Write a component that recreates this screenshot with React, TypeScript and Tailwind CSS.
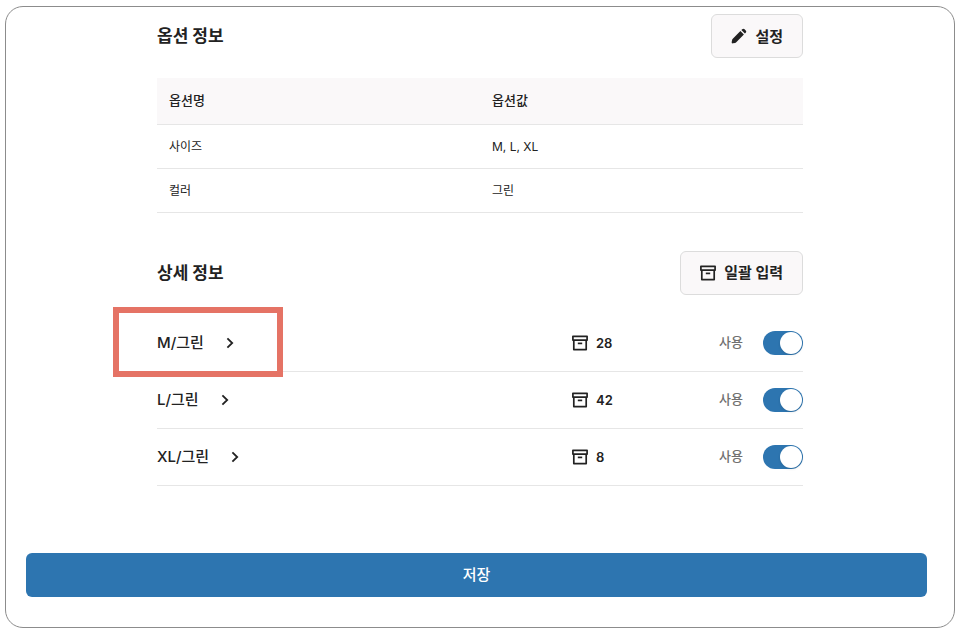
import { useState } from "react";

const options = [
  { name: "사이즈", value: "M, L, XL" },
  { name: "컬러", value: "그린" },
];

const initialVariants = [
  { name: "M/그린", stock: 28, enabled: true, highlighted: true },
  { name: "L/그린", stock: 42, enabled: true, highlighted: false },
  { name: "XL/그린", stock: 8, enabled: true, highlighted: false },
];

function PencilIcon() {
  return (
    <svg viewBox="0 0 16 16" className="size-4 shrink-0" fill="currentColor" aria-hidden="true">
      <path d="M9.4 3.1 12.9 6.6 5 14.5a1.6 1.6 0 0 1-.9.45l-2.1.4a1.1 1.1 0 0 1-1.3-1.3l.4-2.1a1.6 1.6 0 0 1 .45-.9z" />
      <path d="m10.4 2.1 .8-.8a1.7 1.7 0 0 1 2.4 0l1.1 1.1a1.7 1.7 0 0 1 0 2.4l-.8.8z" />
    </svg>
  );
}

function StockIcon() {
  return (
    <svg viewBox="0 0 16 16" className="size-4 shrink-0" fill="none" stroke="currentColor" strokeWidth="1.7" strokeLinejoin="round" aria-hidden="true">
      <path d="M.9 1.3h14.2v3.8H.9z" />
      <path d="M1.8 5.1v9.5h12.4V5.1" />
      <path d="M5.8 8.4h4.4" />
    </svg>
  );
}

function ChevronIcon() {
  return (
    <svg viewBox="0 0 8 12" className="h-3 w-2" fill="none" stroke="currentColor" strokeWidth="1.8" aria-hidden="true">
      <path d="M1.4 1.4 6.2 6l-4.8 4.6" />
    </svg>
  );
}

export default function App() {
  const [variants, setVariants] = useState(initialVariants);

  const toggle = (name: string) =>
    setVariants((prev) => prev.map((v) => (v.name === name ? { ...v, enabled: !v.enabled } : v)));

  return (
    <div className="bg-white px-[5px] py-1.5 font-[Inter,'Noto_Sans_CJK_KR',sans-serif] text-[#222222]">
      <main className="rounded-[18px] border border-[#8c8c8c] pt-[7px] pb-[30px]">
        <div className="mx-auto w-full max-w-[646px]">
          {/* Options */}
          <section>
            <div className="flex items-center justify-between">
              <h2 className="pt-0.5 text-[17px] font-bold">옵션 정보</h2>
              <button type="button" className="flex h-11 items-center gap-2 rounded-md border border-[#dcdcdc] bg-[#faf8f9] px-[19px] text-[15px] font-bold">
                <PencilIcon />
                <span className="pt-0.5">설정</span>
              </button>
            </div>
            <table className="mt-5 w-full table-fixed text-left text-xs">
              <thead>
                <tr className="h-[46px] border-b border-[#e6e6e6] bg-[#faf8f9] text-[13px]">
                  <th scope="col" className="px-3 font-medium">옵션명</th>
                  <th scope="col" className="px-3 font-medium">옵션값</th>
                </tr>
              </thead>
              <tbody>
                {options.map((option) => (
                  <tr key={option.name} className="h-11 border-b border-[#e6e6e6]">
                    <td className="px-3 pt-0.5">{option.name}</td>
                    <td className="px-3 pt-0.5">{option.value}</td>
                  </tr>
                ))}
              </tbody>
            </table>
          </section>

          {/* Variants */}
          <section className="mt-[38px]">
            <div className="flex items-center justify-between">
              <h2 className="pt-0.5 text-[17px] font-bold">상세 정보</h2>
              <button type="button" className="flex h-11 items-center gap-2 rounded-md border border-[#dcdcdc] bg-[#faf8f9] px-[19px] text-[15px] font-bold">
                <StockIcon />
                <span className="pt-0.5">일괄 입력</span>
              </button>
            </div>
            <ul className="mt-5">
              {variants.map((variant) => (
                <li key={variant.name} className="relative flex h-[57px] items-center justify-between border-b border-[#e6e6e6]">
                  <button type="button" className="flex items-center gap-[22px] text-[15px] font-medium">
                    <span className="pt-0.5">{variant.name}</span>
                    <ChevronIcon />
                  </button>
                  <div className="flex w-[231px] items-center">
                    <span className="flex flex-1 items-center gap-2 text-[13px] font-semibold">
                      <StockIcon />
                      <span className="pt-0.5">{variant.stock}</span>
                    </span>
                    <label className="flex items-center gap-5 text-[13px] font-medium text-[#707070]">
                      사용
                      <input
                        type="checkbox"
                        role="switch"
                        checked={variant.enabled}
                        onChange={() => toggle(variant.name)}
                        className="flex h-6 w-10 appearance-none items-center rounded-full bg-gray-300 p-px before:size-[22px] before:rounded-full before:bg-white before:shadow-sm checked:justify-end checked:bg-[#2d75b0]"
                      />
                    </label>
                  </div>
                  {variant.highlighted && (
                    <div className="pointer-events-none absolute -top-2 -bottom-1.5 -left-11 w-[170px] border-6 border-[#e57365]" />
                  )}
                </li>
              ))}
            </ul>
          </section>
        </div>

        <div className="mt-[67px] pr-[27px] pl-5">
          <button type="button" className="h-11 w-full rounded-md bg-[#2d75b0] pt-0.5 text-[15px] font-medium text-white">
            저장
          </button>
        </div>
      </main>
    </div>
  );
}
